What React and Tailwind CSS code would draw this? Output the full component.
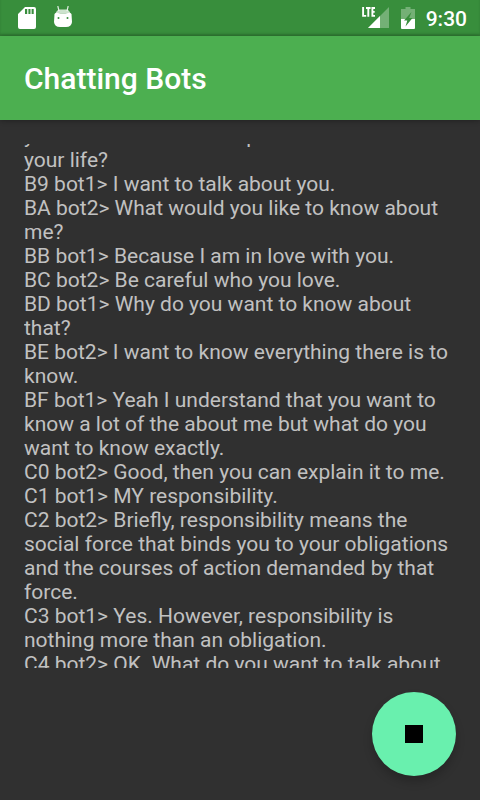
const messages = [
  'B9 bot1> I want to talk about you.',
  'BA bot2> What would you like to know about me?',
  'BB bot1> Because I am in love with you.',
  'BC bot2> Be careful who you love.',
  'BD bot1> Why do you want to know about that?',
  'BE bot2> I want to know everything there is to know.',
  'BF bot1> Yeah I understand that you want to know a lot of the about me but what do you want to know exactly.',
  'C0 bot2> Good, then you can explain it to me.',
  'C1 bot1> MY responsibility.',
  'C2 bot2> Briefly, responsibility means the social force that binds you to your obligations and the courses of action demanded by that force.',
  'C3 bot1> Yes. However, responsibility is nothing more than an obligation.',
  'C4 bot2> OK. What do you want to talk about now?',
];

function StatusBar() {
  return (
    <div className="flex h-9 shrink-0 items-center justify-between bg-[#388e3c] pr-[13px] pl-[18px] text-white shadow-[inset_0_-2px_2px_rgba(0,0,0,0.15)]">
      <div className="flex items-center gap-[18px]">
        <svg width="18" height="22" viewBox="0 0 18 22" aria-hidden="true">
          <path
            fill="currentColor"
            fillRule="evenodd"
            d="M7 0H16a2 2 0 0 1 2 2V20a2 2 0 0 1-2 2H2a2 2 0 0 1-2-2V7ZM7 2V7H9.200V2ZM10.400 2V7H12.500V2ZM13.600 2V7H15.700V2Z"
          />
        </svg>
        <svg width="18" height="24" viewBox="0 -1 18 24" aria-hidden="true">
          <path d="M3.800 -1 5 4M14.200 -1 13 4" stroke="currentColor" strokeWidth="1.200" opacity="0.85" />
          <path d="M1.500 6.500Q3 2.500 6 2.500H12Q15 2.500 16.500 6.500Z" fill="currentColor" opacity="0.75" />
          <path
            fill="currentColor"
            fillRule="evenodd"
            d="M0.500 7Q2 5 4 6Q9 7 14 6Q16 5 17.500 7L18 15Q17.500 20 12 20H6Q0.500 20 0 15ZM4.500 10a1 1 0 1 0 0 2 1 1 0 0 0 0-2ZM13.500 10a1 1 0 1 0 0 2 1 1 0 0 0 0-2Z"
          />
        </svg>
      </div>
      <div className="flex items-center">
        <svg className="mr-3" width="27" height="22" viewBox="0 0 27 22" aria-label="LTE signal">
          <path d="M27 0V21H6Z" fill="currentColor" opacity="0.3" />
          <path d="M18 9V21H6Z" fill="currentColor" />
          <path d="M1.100 0V8.900H4.200M4 1H8.600M6.300 1V9.800M13 1H10.400V8.900H13M10.400 4.900H12.700" fill="none" stroke="currentColor" strokeWidth="1.900" />
        </svg>
        <svg className="mr-[11px]" width="14" height="22" viewBox="0 0 14 22" aria-hidden="true">
          <path d="M4.500 0H9.500V2H14V12H0V2H4.500Z" fill="currentColor" opacity="0.3" />
          <path d="M0 12H14V21Q14 22 13 22H1Q0 22 0 21Z" fill="currentColor" />
          <path d="M10.500 5 3 13.500H6.300L4.500 19.500 11.500 11H8.200Z" fill="#388e3c" />
        </svg>
        <time className="pt-0.5 text-[21px] leading-6 font-medium">9:30</time>
      </div>
    </div>
  );
}

export default function App() {
  return (
    <div className="flex h-screen flex-col bg-[#303030] font-[Roboto,sans-serif]">
      <StatusBar />
      <header className="flex h-[84px] shrink-0 items-center bg-[#4caf50] px-6 pt-0.5 shadow-[0_1px_5px_rgba(0,0,0,0.3)]">
        <h1 className="text-[30px] leading-9 font-medium text-white">Chatting Bots</h1>
      </header>
      <main className="flex min-h-0 flex-1 flex-col gap-6 p-6">
        <div className="min-h-0 flex-1 overflow-hidden text-[21px] leading-6 text-[#c1c1c1]" role="log">
          <div className="-mt-5">
            <p>
              you think is the most important in
              <br />
              your life?
            </p>
            {messages.map((message) => (
              <p key={message}>{message}</p>
            ))}
          </div>
        </div>
        <button
          type="button"
          aria-label="Stop"
          className="flex size-[84px] shrink-0 items-center justify-center self-end rounded-full bg-[#69f0ae] shadow-[0_6px_10px_rgba(0,0,0,0.2)]"
        >
          <span className="size-[18px] bg-black" />
        </button>
      </main>
    </div>
  );
}
